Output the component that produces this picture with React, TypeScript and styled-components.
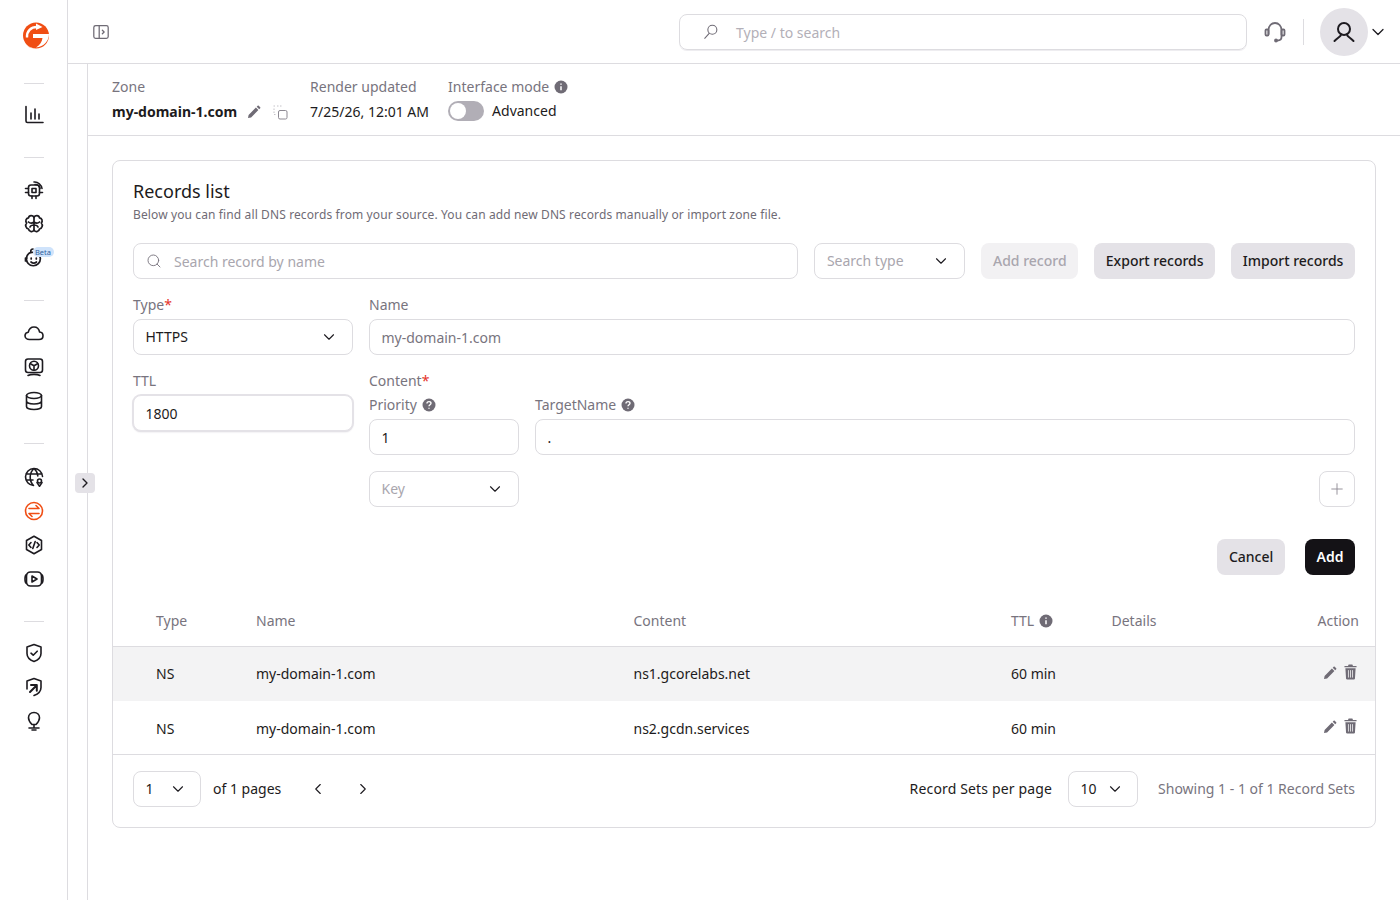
import { ReactNode } from "react";
import styled, { createGlobalStyle } from "styled-components";
import { ChevronDown, ChevronLeft, ChevronRight, Plus, Search } from "lucide-react";

const GlobalStyle = createGlobalStyle`
  html, body {
    margin: 0;
    padding: 0;
    background: #fff;
  }
  * {
    box-sizing: border-box;
  }
  body {
    font-family: "Noto Sans", "Open Sans", sans-serif;
    font-size: 14px;
    color: #1d1b20;
  }
`;

const Page = styled.div`
  display: flex;
  width: 1400px;
  height: 900px;
  overflow: hidden;
  background: #fff;
`;

const Sidebar = styled.nav`
  flex: 0 0 68px;
  border-right: 1px solid #dddce0;
  display: flex;
  flex-direction: column;
  align-items: center;
  padding-top: 19px;
`;

const LogoWrap = styled.div`
  width: 32px;
  height: 32px;
  margin-bottom: 32px;
  margin-left: 4px;
  color: #f04e14;
`;

const NavDivider = styled.div`
  width: 20px;
  height: 1px;
  background: #dddce0;
  flex: none;
`;

const NavGroup = styled.div<{ $top?: number }>`
  display: flex;
  flex-direction: column;
  align-items: center;
  padding: ${({ $top }) => $top ?? 21}px 0 32px;
  gap: 14px;
`;

const NavIcon = styled.div<{ $active?: boolean }>`
  position: relative;
  width: 20px;
  height: 20px;
  color: ${({ $active }) => ($active ? "#f04e14" : "#1d1b20")};

  svg {
    display: block;
    width: 20px;
    height: 20px;
  }
`;

const BetaTag = styled.span`
  position: absolute;
  top: -1px;
  left: 9px;
  height: 10px;
  padding: 0 2.5px;
  border-radius: 5px;
  background: #cfe3fb;
  color: #2d5f9e;
  font-size: 7.5px;
  line-height: 10px;
`;

const Main = styled.div`
  flex: 1;
  display: flex;
  flex-direction: column;
  min-width: 0;
`;

const TopBar = styled.header`
  flex: 0 0 64px;
  border-bottom: 1px solid #dddce0;
  display: flex;
  align-items: center;
  padding: 0 12px 0 24px;
`;

const PanelButton = styled.div`
  width: 18px;
  height: 18px;
  color: #6f6b75;
  margin-top: 1px;
`;

const GlobalSearch = styled.div`
  margin-left: auto;
  width: 568px;
  height: 36px;
  border: 1px solid #dddce0;
  border-radius: 8px;
  display: flex;
  align-items: center;
  padding-left: 22px;
  gap: 16px;
  color: #b3b0b8;
  box-shadow: 0 1px 0 #eeedf0;
`;

const GlobalSearchText = styled.span`
  margin-top: 2px;
`;

const SearchGlyph = styled.div`
  width: 18px;
  height: 18px;
  color: #6f6b75;
`;

const SupportIcon = styled.div`
  width: 24px;
  height: 24px;
  margin-left: 16px;
  color: #6f6b75;
`;

const TopSeparator = styled.div`
  width: 1px;
  height: 26px;
  background: #dddce0;
  margin: 0 16px;
`;

const Avatar = styled.div`
  width: 48px;
  height: 48px;
  border-radius: 50%;
  background: #e4e2e7;
  display: flex;
  align-items: center;
  justify-content: center;
  color: #1d1b20;
`;

const AvatarCaret = styled.div`
  display: flex;
  color: #1d1b20;
`;

const ContentArea = styled.div`
  flex: 1;
  display: flex;
  min-height: 0;
`;

const CollapseRail = styled.div`
  position: relative;
  flex: 0 0 20px;
  border-right: 1px solid #dddce0;
`;

const CollapseButton = styled.div`
  position: absolute;
  top: 409px;
  left: 7px;
  width: 20px;
  height: 20px;
  border-radius: 4px;
  background: #e4e2e7;
  display: flex;
  align-items: center;
  justify-content: center;
  color: #1d1b20;
`;

const Content = styled.main`
  flex: 1;
  min-width: 0;
`;

const ZoneHeader = styled.section`
  height: 72px;
  border-bottom: 1px solid #dddce0;
  padding: 13px 0 0 24px;
  display: flex;
  gap: 20px;
`;

const ZoneColumn = styled.div<{ $gap?: number; $width?: number }>`
  display: flex;
  flex-direction: column;
  gap: ${({ $gap }) => $gap ?? 5}px;
  width: ${({ $width }) => ($width ? `${$width}px` : "auto")};
  white-space: nowrap;
`;

const MetaLabel = styled.div`
  display: flex;
  align-items: center;
  gap: 5px;
  height: 20px;
  color: #78747e;
  font-size: 14px;
  line-height: 20px;
`;

const MetaValue = styled.div`
  display: flex;
  align-items: center;
  height: 20px;
  font-size: 14px;
  line-height: 20px;
`;

const ZoneName = styled.strong`
  font-weight: 700;
  margin-right: 10px;
`;

const SmallIcon = styled.span<{ $gap?: number }>`
  display: inline-flex;
  margin-right: ${({ $gap }) => $gap ?? 0}px;
  color: #6f6b75;
`;

const Toggle = styled.div`
  width: 36px;
  height: 20px;
  border-radius: 10px;
  background: #b1aeb6;
  padding: 2px;
  margin-right: 8px;

  &::before {
    content: "";
    display: block;
    width: 16px;
    height: 16px;
    border-radius: 50%;
    background: #fff;
  }
`;

const Card = styled.section`
  margin: 24px 24px 0;
  height: 668px;
  border: 1px solid #dddce0;
  border-radius: 8px;
  display: flex;
  flex-direction: column;
`;

const CardBody = styled.div`
  padding: 18px 20px 0;
`;

const Title = styled.h2`
  margin: 0;
  font-size: 18px;
  font-weight: 400;
  line-height: 24px;
`;

const Description = styled.p`
  margin: 3px 0 0;
  font-size: 12px;
  letter-spacing: 0.118px;
  line-height: 18px;
  color: #6f6b75;
`;

const Toolbar = styled.div`
  display: flex;
  gap: 16px;
  margin-top: 19px;
`;

const Field = styled.div<{ $width?: number; $focus?: boolean; $muted?: boolean; $grow?: boolean; $left?: number }>`
  flex: ${({ $grow, $width }) => ($grow ? "1" : `0 0 ${$width}px`)};
  height: 36px;
  margin-left: ${({ $left }) => $left ?? 0}px;
  border: 1px solid ${({ $focus }) => ($focus ? "#e4e2e7" : "#dddce0")};
  border-radius: 8px;
  display: flex;
  align-items: center;
  justify-content: space-between;
  padding: 0 14px 0 11.5px;
  font-size: 14px;
  background: #fff;
  color: ${({ $muted }) => ($muted ? "#78747e" : "#1d1b20")};
  box-shadow: ${({ $focus }) => ($focus ? "0 0 0 1px #e4e2e7, 0 1px 2px #d8d6dc" : "none")};
`;

const SelectValue = styled.span`
  margin-bottom: 2px;
`;

const Placeholder = styled(SelectValue)`
  color: #a9a6ae;
`;

const SearchField = styled(Field)`
  justify-content: flex-start;
  gap: 12px;
  padding-left: 12px;
  color: #a9a6ae;
`;

const Button = styled.div<{ $variant?: "grey" | "off" | "dark" }>`
  height: 36px;
  padding: 0 11.6px 2px;
  border-radius: 8px;
  display: flex;
  align-items: center;
  font-size: 14px;
  font-weight: ${({ $variant }) => ($variant === "dark" ? 600 : 500)};
  background: ${({ $variant }) =>
    $variant === "dark" ? "#141216" : $variant === "off" ? "#f2f1f3" : "#e4e2e7"};
  color: ${({ $variant }) =>
    $variant === "dark" ? "#fff" : $variant === "off" ? "#a9a6ae" : "#1d1b20"};
`;

const FormGrid = styled.div`
  display: grid;
  grid-template-columns: 220px 1fr;
  column-gap: 16px;
  margin-top: 16px;
`;

const FieldBlock = styled.div`
  min-width: 0;
`;

const FieldLabel = styled.div`
  height: 20px;
  margin-bottom: 4px;
  display: flex;
  align-items: center;
  gap: 5px;
  color: #78747e;
  font-size: 14px;
  line-height: 20px;
`;

const Required = styled.span`
  color: #e5342b;
  margin-left: -5px;
`;

const ContentRow = styled.div`
  display: flex;
  gap: 16px;
`;

const GrowBlock = styled(FieldBlock)`
  flex: 1;
`;

const NarrowBlock = styled(FieldBlock)`
  flex: 0 0 150px;
`;

const KeyRow = styled.div`
  display: flex;
  justify-content: space-between;
  margin-top: 16px;
`;

const PlusButton = styled.div`
  width: 36px;
  height: 36px;
  border: 1px solid #dddce0;
  border-radius: 8px;
  display: flex;
  align-items: center;
  justify-content: center;
  color: #8d8992;
`;

const FormActions = styled.div`
  display: flex;
  justify-content: flex-end;
  gap: 20px;
  margin-top: 32px;
`;

const TableRow = styled.div<{ $head?: boolean; $shade?: boolean; $last?: boolean }>`
  display: grid;
  grid-template-columns: 100px 377.5px 377.5px 100.5px 1fr auto;
  align-items: center;
  height: ${({ $head, $last }) => ($head ? 52 : $last ? 53 : 54)}px;
  padding: ${({ $last }) => ($last ? 2 : 0)}px 16px ${({ $shade }) => ($shade ? 2 : 0)}px 43px;
  background: ${({ $shade }) => ($shade ? "#f3f3f4" : "transparent")};
  border-bottom: ${({ $head }) => ($head ? "1px solid #dddce0" : "none")};
  color: ${({ $head }) => ($head ? "#78747e" : "#1d1b20")};
`;

const TableHeadWrap = styled.div`
  margin-top: 20px;
`;

const CellWithIcon = styled.div`
  display: flex;
  align-items: center;
  gap: 5px;
`;

const RowActions = styled.div<{ $lift: number }>`
  display: flex;
  align-items: flex-end;
  gap: 7px;
  color: #6f6b75;
  margin: -${({ $lift }) => $lift}px 2px 0 0;
`;

const Pager = styled.footer`
  flex: 1;
  border-top: 1px solid #dddce0;
  display: flex;
  align-items: center;
  padding: 0 20px 4px;
`;

const PagerSelect = styled(Field)`
  padding-right: 13px;
  color: #1d1b20;
`;

const PagerText = styled.span<{ $muted?: boolean; $left?: number }>`
  margin-left: ${({ $left }) => $left ?? 0}px;
  margin-bottom: 2px;
  color: ${({ $muted }) => ($muted ? "#78747e" : "#1d1b20")};
`;

const PerPageText = styled(PagerText)`
  letter-spacing: 0.15px;
`;

const PagerArrow = styled.div<{ $left: number }>`
  display: flex;
  margin-left: ${({ $left }) => $left}px;
  color: #1d1b20;
`;

const PagerSpacer = styled.div`
  flex: 1;
`;

function Ico({ children, size = 20, sw = 1.6 }: { children: ReactNode; size?: number; sw?: number }) {
  return (
    <svg
      viewBox="0 0 20 20"
      width={size}
      height={size}
      fill="none"
      stroke="currentColor"
      strokeWidth={sw}
      strokeLinecap="round"
      strokeLinejoin="round"
    >
      {children}
    </svg>
  );
}

const Logo = () => (
  <svg viewBox="0 0 32 32" width="32" height="32">
    <circle cx="16" cy="16.500" r="13" fill="currentColor" />
    <path d="M7 18.500C6.500 12 11 8 17 8" fill="none" stroke="#fff" strokeWidth="2.400" />
    <path d="M16 4.500l6.500 3.500-6.500 3z" fill="#fff" />
    <path d="M13 15h16c0 7-5 12.500-13 13.500 4-2.500 6-5.500 6.500-9.500H13z" fill="#fff" />
    <path d="M6 25c2 2.500 5 3.800 8 4.200-3 .6-6-1-8-4.200z" fill="#fbb79a" />
  </svg>
);

const Pencil = ({ size = 14 }: { size?: number }) => (
  <svg viewBox="0 0 14 14" width={size} height={size} fill="currentColor">
    <path d="M1 13l.6-3.100L8.900 2.600l2.500 2.500-7.300 7.300zM9.700 1.800l1-1c.3-.3.7-.3 1 0l1.500 1.500c.3.3.3.7 0 1l-1 1z" />
  </svg>
);

const Trash = () => (
  <svg viewBox="0 0 14 16" width="13" height="16" fill="currentColor">
    <path d="M5 0h4l.7 1.500H13.500V3H.5V1.500h3.800zM1.500 4h11l-.7 11c0 .5-.4 1-1 1H3.200c-.6 0-1-.5-1-1z" />
    <path d="M4.800 6v8M7 6v8M9.200 6v8" stroke="#fff" strokeWidth=".8" />
  </svg>
);

const InfoDot = ({ mark }: { mark: "i" | "?" }) => (
  <svg viewBox="0 0 14 14" width="14" height="14">
    <circle cx="7" cy="7" r="6.500" fill="#6f6b75" />
    {mark === "i" ? (
      <path d="M7 6.200v4M7 3.600v1.200" stroke="#fff" strokeWidth="1.500" />
    ) : (
      <path
        d="M5 5.400c0-1.200 1-1.800 2-1.800s2 .6 2 1.700c0 1.500-2 1.500-2 3M7 9.700v1.100"
        stroke="#fff"
        strokeWidth="1.400"
        fill="none"
      />
    )}
  </svg>
);

const navIcons = {
  chart: (
    <Ico>
      <path d="M2 1.500V16c0 1 .6 1.500 1.500 1.500H19M7 8v6M11 4v10M15 9v5" />
    </Ico>
  ),
  chip: (
    <Ico>
      <rect x="4.500" y="5" width="11" height="11" rx="2.500" />
      <rect x="8" y="8.500" width="4" height="4" />
      <path d="M1.500 8.500h3M1.500 12.500h3M15.500 12.500h3M8 16v2.500M12 16v2.500M10 2c4-.5 7.500 3 8 6.500M11 4.500c2.500 0 4.500 2 5 4" />
    </Ico>
  ),
  brain: (
    <Ico sw={1.7}>
      <path d="M10 3.500C9 1 5 1 4.500 3.800 2 4.200 1 7 2.700 9 .8 11 1.800 14.500 4.500 15c.5 3 4.500 3.500 5.500 1 1 2.500 5 2 5.500-1 2.700-.5 3.700-4 1.800-6C19 7 18 4.200 15.500 3.800 15 1 11 1 10 3.500z" />
      <path d="M10 3.500v13M4.500 8c1.500 1.500 3.500 1.500 5.500 0M15.500 8c-1.500 1.500-3.500 1.500-5.500 0M6 13c.5-1.500 2-2 4-2M14 13c-.5-1.500-2-2-4-2" />
    </Ico>
  ),
  bot: (
    <Ico sw={1.7}>
      <path d="M9 1c-1.500 0-2.500 1-2.200 3" />
      <path d="M14 5.500A7 7 0 1 1 5 5.300c1-.7 2.200-1.100 3.500-1M3 10H1.500v3H3" />
      <path d="M7.200 10v1M12.300 10v1M7 14c1.700 1.500 3.800 1.500 5.500 0" />
    </Ico>
  ),
  cloud: (
    <Ico>
      <path d="M5.500 16.500C3 16.500 1 15 1 12.800c0-2 1.500-3.400 3.300-3.600C5 6 7.300 4 10 4c2.800 0 5 2 5.600 5 2 .2 3.400 1.700 3.400 3.700 0 2.200-1.700 3.800-4 3.800z" />
    </Ico>
  ),
  monitor: (
    <Ico>
      <rect x="1.500" y="2" width="17" height="13.500" rx="2.500" />
      <circle cx="10" cy="8.700" r="4.500" />
      <path d="M10 8.700l-3.500-2M10 8.700l3.500-2M10 8.700v4.300M4 18.500c3-1.500 9-1.500 12 0" />
    </Ico>
  ),
  db: (
    <Ico>
      <ellipse cx="10" cy="4.500" rx="7.500" ry="3" />
      <path d="M2.500 4.500v11c0 1.700 3.400 3 7.500 3s7.500-1.300 7.500-3v-11M2.500 10c0 1.700 3.400 3 7.500 3s7.500-1.300 7.500-3" />
    </Ico>
  ),
  globe: (
    <Ico>
      <path d="M18.500 9.500A8.500 8.500 0 1 0 9.500 18.500M10 1.500c-5 4.500-5 12.500-.5 17M10 1.500c2.500 2.200 3.700 5 3.800 7.500M2 7h16M2 13h7" />
      <circle cx="15.500" cy="14" r="2" />
      <path d="M15.500 19.200l-2.500-3.600M15.500 19.200l2.500-3.600" />
    </Ico>
  ),
  swap: (
    <Ico>
      <circle cx="10" cy="10" r="8.500" />
      <path d="M5 7.500h10L12 4.500M15 12.500H5l3 3" />
    </Ico>
  ),
  code: (
    <Ico>
      <path d="M10 1.200l7.500 4.300v9L10 18.800l-7.500-4.300v-9z" />
      <path d="M7 7.500L4.800 10 7 12.500M13 7.500l2.200 2.500-2.200 2.500M11.200 6.500L8.800 13.500" />
    </Ico>
  ),
  video: (
    <Ico>
      <rect x="2.500" y="3" width="15" height="14" rx="4" />
      <path d="M2.500 5.500C.5 6.500.5 13.500 2.500 14.500M17.500 5.500C19.500 6.500 19.500 13.500 17.500 14.500M8 7l5 3-5 3z" />
    </Ico>
  ),
  shield: (
    <Ico>
      <path d="M10 1.500l7 2.500v6.500c0 4-3.500 6.700-7 8-3.500-1.300-7-4-7-8V4z" />
      <path d="M7 10.200l2.200 2 4-4" />
    </Ico>
  ),
  shieldOut: (
    <Ico>
      <path d="M3 12V4l7-2.500L17 4v6.500c0 4-3.500 6.700-7 8" />
      <path d="M6 15l6.500-6.500M7 8h5.800v5.800" strokeWidth="2" />
    </Ico>
  ),
  bulb: (
    <Ico>
      <path d="M10 1.500c-3.500 0-5.500 2.300-5.500 5.300 0 3 2 5.200 3.500 6.700h4c1.500-1.500 3.500-3.700 3.500-6.700 0-3-2-5.300-5.500-5.300zM10 13.500v3.500M5 17h10M8 19h4" />
    </Ico>
  ),
};

export default function App() {
  return (
    <Page>
      <GlobalStyle />
      <Sidebar>
        <LogoWrap>
          <Logo />
        </LogoWrap>
        <NavDivider />
        <NavGroup>
          <NavIcon>{navIcons.chart}</NavIcon>
        </NavGroup>
        <NavDivider />
        <NavGroup $top={22}>
          <NavIcon>{navIcons.chip}</NavIcon>
          <NavIcon>{navIcons.brain}</NavIcon>
          <NavIcon>
            {navIcons.bot}
            <BetaTag>Beta</BetaTag>
          </NavIcon>
        </NavGroup>
        <NavDivider />
        <NavGroup $top={22}>
          <NavIcon>{navIcons.cloud}</NavIcon>
          <NavIcon>{navIcons.monitor}</NavIcon>
          <NavIcon>{navIcons.db}</NavIcon>
        </NavGroup>
        <NavDivider />
        <NavGroup $top={23}>
          <NavIcon>{navIcons.globe}</NavIcon>
          <NavIcon $active>{navIcons.swap}</NavIcon>
          <NavIcon>{navIcons.code}</NavIcon>
          <NavIcon>{navIcons.video}</NavIcon>
        </NavGroup>
        <NavDivider />
        <NavGroup>
          <NavIcon>{navIcons.shield}</NavIcon>
          <NavIcon>{navIcons.shieldOut}</NavIcon>
          <NavIcon>{navIcons.bulb}</NavIcon>
        </NavGroup>
      </Sidebar>
      <Main>
        <TopBar>
          <PanelButton>
            <Ico size={18} sw={1.4}>
              <rect x="2" y="3" width="16" height="14" rx="2" />
              <path d="M8 3v14M11.500 8l2 2-2 2" />
            </Ico>
          </PanelButton>
          <GlobalSearch>
            <SearchGlyph>
              <Ico size={18} sw={1.2}>
                <circle cx="11.500" cy="7.500" r="5" />
                <path d="M8 11.500l-5 5.500" />
              </Ico>
            </SearchGlyph>
            <GlobalSearchText>Type / to search</GlobalSearchText>
          </GlobalSearch>
          <SupportIcon>
            <svg viewBox="0 0 24 24" width="24" height="24" fill="none" stroke="currentColor" strokeWidth="1.800" strokeLinecap="round">
              <path d="M5.500 14V10c0-4 2.800-7 6.500-7s6.500 3 6.500 7v7c0 2-1.500 3.500-4 3.500" />
              <rect x="2.500" y="9.500" width="3" height="6" rx="1" />
              <rect x="18.500" y="9.500" width="3" height="6" rx="1" />
              <circle cx="13" cy="20.500" r="1" fill="currentColor" />
            </svg>
          </SupportIcon>
          <TopSeparator />
          <Avatar>
            <svg viewBox="0 0 24 24" width="24" height="24" fill="none" stroke="currentColor" strokeWidth="2" strokeLinecap="round">
              <circle cx="12" cy="9" r="6" />
              <path d="M9 14.500c0 2-3 3-6.500 6.500M15 14.500c0 2 3 3 6.500 6.500" />
            </svg>
          </Avatar>
          <AvatarCaret>
            <ChevronDown size={20} strokeWidth={1.500} />
          </AvatarCaret>
        </TopBar>
        <ContentArea>
          <CollapseRail>
            <CollapseButton>
              <ChevronRight size={16} strokeWidth={2} />
            </CollapseButton>
          </CollapseRail>
          <Content>
            <ZoneHeader>
              <ZoneColumn>
                <MetaLabel>Zone</MetaLabel>
                <MetaValue>
                  <ZoneName>my-domain-1.com</ZoneName>
                  <SmallIcon $gap={12}>
                    <Pencil />
                  </SmallIcon>
                  <SmallIcon $gap={2}>
                    <svg viewBox="0 0 15 15" width="15" height="15" fill="none" strokeWidth="1">
                      <rect x="5.500" y="5.500" width="8.500" height="8.500" rx="1.500" stroke="#8d8992" />
                      <path d="M.5 1h1.500M4 1h1.500M7 1h1.500M1 3.500V5M1 6.500V8M1 9.500h1.500" stroke="#c4c2c8" />
                    </svg>
                  </SmallIcon>
                </MetaValue>
              </ZoneColumn>
              <ZoneColumn $width={118}>
                <MetaLabel>Render updated</MetaLabel>
                <MetaValue>7/25/26, 12:01 AM</MetaValue>
              </ZoneColumn>
              <ZoneColumn $gap={4}>
                <MetaLabel>
                  Interface mode <InfoDot mark="i" />
                </MetaLabel>
                <MetaValue>
                  <Toggle />
                  Advanced
                </MetaValue>
              </ZoneColumn>
            </ZoneHeader>
            <Card>
              <CardBody>
                <Title>Records list</Title>
                <Description>
                  Below you can find all DNS records from your source. You can add new DNS records manually or import zone file.
                </Description>
                <Toolbar>
                  <SearchField $grow>
                    <Search size={16} strokeWidth={1.400} color="#78747e" />
                    Search record by name
                  </SearchField>
                  <Field $width={151}>
                    <Placeholder>Search type</Placeholder>
                    <ChevronDown size={18} strokeWidth={1.500} />
                  </Field>
                  <Button $variant="off">Add record</Button>
                  <Button>Export records</Button>
                  <Button>Import records</Button>
                </Toolbar>
                <FormGrid>
                  <FieldBlock>
                    <FieldLabel>
                      Type<Required>*</Required>
                    </FieldLabel>
                    <Field>
                      <SelectValue>HTTPS</SelectValue>
                      <ChevronDown size={18} strokeWidth={1.500} />
                    </Field>
                  </FieldBlock>
                  <FieldBlock>
                    <FieldLabel>Name</FieldLabel>
                    <Field $muted>my-domain-1.com</Field>
                  </FieldBlock>
                </FormGrid>
                <FormGrid>
                  <FieldBlock>
                    <FieldLabel>TTL</FieldLabel>
                    <Field $focus>1800</Field>
                  </FieldBlock>
                  <FieldBlock>
                    <FieldLabel>
                      Content<Required>*</Required>
                    </FieldLabel>
                    <ContentRow>
                      <NarrowBlock>
                        <FieldLabel>
                          Priority <InfoDot mark="?" />
                        </FieldLabel>
                        <Field>1</Field>
                      </NarrowBlock>
                      <GrowBlock>
                        <FieldLabel>
                          TargetName <InfoDot mark="?" />
                        </FieldLabel>
                        <Field>.</Field>
                      </GrowBlock>
                    </ContentRow>
                    <KeyRow>
                      <Field $width={150}>
                        <Placeholder>Key</Placeholder>
                        <ChevronDown size={18} strokeWidth={1.500} />
                      </Field>
                      <PlusButton>
                        <Plus size={18} strokeWidth={1.200} />
                      </PlusButton>
                    </KeyRow>
                  </FieldBlock>
                </FormGrid>
                <FormActions>
                  <Button>Cancel</Button>
                  <Button $variant="dark">Add</Button>
                </FormActions>
              </CardBody>
              <TableHeadWrap>
                <TableRow $head>
                  <div>Type</div>
                  <div>Name</div>
                  <div>Content</div>
                  <CellWithIcon>
                    TTL <InfoDot mark="i" />
                  </CellWithIcon>
                  <div>Details</div>
                  <div>Action</div>
                </TableRow>
                <TableRow $shade>
                  <div>NS</div>
                  <div>my-domain-1.com</div>
                  <div>ns1.gcorelabs.net</div>
                  <div>60 min</div>
                  <div />
                  <RowActions $lift={3}>
                    <Pencil />
                    <Trash />
                  </RowActions>
                </TableRow>
                <TableRow $last>
                  <div>NS</div>
                  <div>my-domain-1.com</div>
                  <div>ns2.gcdn.services</div>
                  <div>60 min</div>
                  <div />
                  <RowActions $lift={6}>
                    <Pencil />
                    <Trash />
                  </RowActions>
                </TableRow>
              </TableHeadWrap>
              <Pager>
                <PagerSelect $width={68}>
                  <SelectValue>1</SelectValue>
                  <ChevronDown size={18} strokeWidth={1.500} />
                </PagerSelect>
                <PagerText $left={12}>of 1 pages</PagerText>
                <PagerArrow $left={28}>
                  <ChevronLeft size={18} strokeWidth={1.500} />
                </PagerArrow>
                <PagerArrow $left={27}>
                  <ChevronRight size={18} strokeWidth={1.500} />
                </PagerArrow>
                <PagerSpacer />
                <PerPageText>Record Sets per page</PerPageText>
                <PagerSelect $width={70} $left={16}>
                  <SelectValue>10</SelectValue>
                  <ChevronDown size={18} strokeWidth={1.500} />
                </PagerSelect>
                <PagerText $muted $left={20}>
                  Showing 1 - 1 of 1 Record Sets
                </PagerText>
              </Pager>
            </Card>
          </Content>
        </ContentArea>
      </Main>
    </Page>
  );
}
